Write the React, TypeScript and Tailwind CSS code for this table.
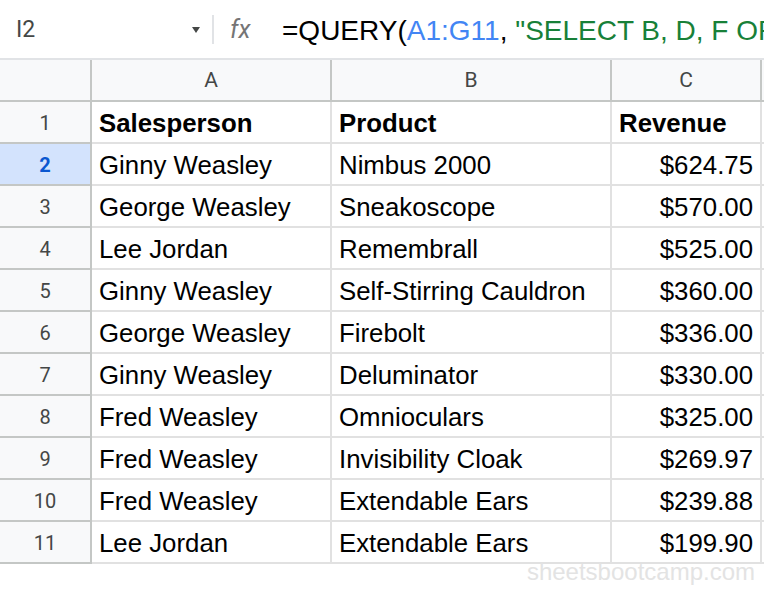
const rows: [string, string, string][] = [
  ["Ginny Weasley", "Nimbus 2000", "$624.75"],
  ["George Weasley", "Sneakoscope", "$570.00"],
  ["Lee Jordan", "Remembrall", "$525.00"],
  ["Ginny Weasley", "Self-Stirring Cauldron", "$360.00"],
  ["George Weasley", "Firebolt", "$336.00"],
  ["Ginny Weasley", "Deluminator", "$330.00"],
  ["Fred Weasley", "Omnioculars", "$325.00"],
  ["Fred Weasley", "Invisibility Cloak", "$269.97"],
  ["Fred Weasley", "Extendable Ears", "$239.88"],
  ["Lee Jordan", "Extendable Ears", "$199.90"],
];

const cellFont = { fontFamily: '"Liberation Sans", Arial, sans-serif' };
const headFont = { fontFamily: 'Roboto, "Liberation Sans", sans-serif' };

const FormulaBar = () => (
  <div className="flex items-center h-[60px] border-b-2 border-[#e1e3e6] bg-white">
    <div className="w-[212px] flex items-center pl-4 pr-3 pt-[3px] text-[23px] text-[#444746]" style={headFont}>
      <span className="flex-1">I2</span>
      <svg width="8" height="6" viewBox="0 0 8 6" className="mt-[-2px]">
        <path d="M0 0 L8 0 L4 6 Z" fill="#444746" />
      </svg>
    </div>
    <div className="w-[2px] h-[29px] bg-[#e1e3e6]" />
    <div className="w-[68px] pl-4 pt-[2px] text-[25px] italic text-[#757575]" style={headFont}>
      fx
    </div>
    <div className="flex-1 pt-[3px] overflow-hidden whitespace-nowrap text-[28px] text-black" style={cellFont}>
      =QUERY(<span className="text-[#4285f4]">A1:G11</span>,{" "}
      <span className="text-[#188038]">"SELECT B, D, F ORDER BY F DESC"</span>, 1)
    </div>
  </div>
);

const ColumnHeader = () => (
  <div className="flex h-[42px] pt-[2px] bg-[#f8f9fa] border-b-2 border-[#c4c7c5] text-[21px] text-[#444746]" style={headFont}>
    <div className="w-[92px] border-r-2 border-[#c4c7c5] -mt-[2px]" />
    <div className="w-[240px] border-r-2 border-[#c4c7c5] -mt-[2px] pt-[2px] flex items-center justify-center">A</div>
    <div className="w-[280px] border-r-2 border-[#c4c7c5] -mt-[2px] pt-[2px] flex items-center justify-center">B</div>
    <div className="w-[150px] border-r-2 border-[#c4c7c5] -mt-[2px] pt-[2px] flex items-center justify-center">C</div>
    <div className="flex-1" />
  </div>
);

type RowProps = { num: number; cells: [string, string, string]; bold?: boolean; selected?: boolean };

const Row = ({ num, cells, bold, selected }: RowProps) => (
  <div className="flex h-[42px]">
    <div
      className={`w-[92px] border-r-2 border-b-2 border-[#c4c7c5] flex items-center justify-center pt-[2px] text-[20px] ${
        selected ? "bg-[#d3e3fd] text-[#0b57d0] font-bold" : "bg-[#f8f9fa] text-[#444746]"
      }`}
      style={headFont}
    >
      {num}
    </div>
    <div
      className={`w-[240px] border-r-2 border-b-2 border-[#e1e1e1] flex items-center pt-[3px] px-[7px] text-[25.8px] text-black whitespace-nowrap ${bold ? "font-bold" : ""}`}
      style={cellFont}
    >
      {cells[0]}
    </div>
    <div
      className={`w-[280px] border-r-2 border-b-2 border-[#e1e1e1] flex items-center pt-[3px] px-[7px] text-[25.8px] text-black whitespace-nowrap ${bold ? "font-bold" : ""}`}
      style={cellFont}
    >
      {cells[1]}
    </div>
    <div
      className={`w-[150px] border-r-2 border-b-2 border-[#e1e1e1] flex items-center pt-[3px] px-[7px] text-[25.8px] text-black whitespace-nowrap ${
        bold ? "font-bold justify-start" : "justify-end"
      }`}
      style={cellFont}
    >
      {cells[2]}
    </div>
    <div className="flex-1 border-b-2 border-[#e1e1e1]" />
  </div>
);

export default function App() {
  return (
    <div className="relative w-[764px] h-[590px] bg-white overflow-hidden">
      <FormulaBar />
      <ColumnHeader />
      <Row num={1} cells={["Salesperson", "Product", "Revenue"]} bold />
      {rows.map((r, i) => (
        <Row key={i} num={i + 2} cells={r} selected={i === 0} />
      ))}
      {/* watermark */}
      <span className="absolute right-[9px] top-[560px] leading-none text-[24px] text-[#e3e3e3]" style={cellFont}>
        sheetsbootcamp.com
      </span>
    </div>
  );
}
